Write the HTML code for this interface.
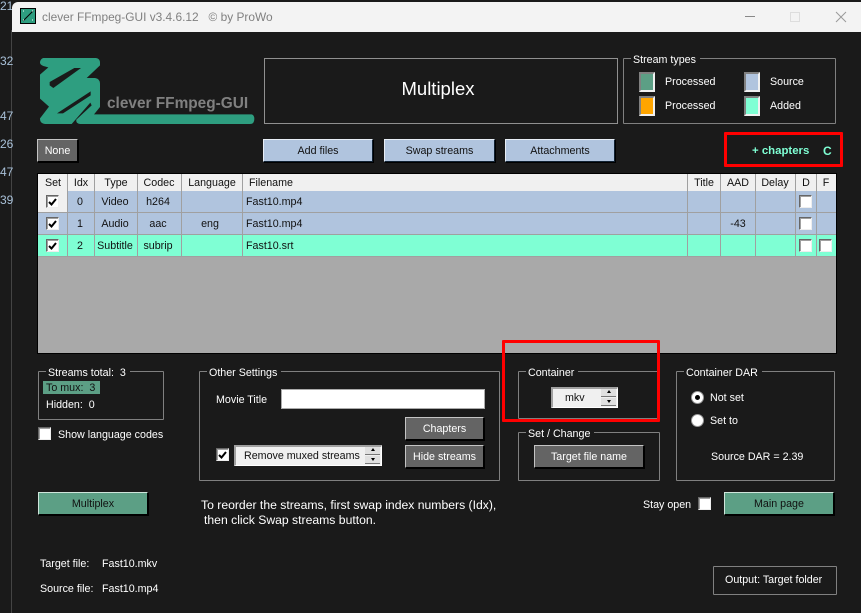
<!DOCTYPE html>
<html><head><meta charset="utf-8"><style>
html,body{margin:0;padding:0;background:#1a1a1a}
#p{position:relative;width:861px;height:613px;overflow:hidden;background:#1a1a1a;font:10.7px "Liberation Sans",sans-serif;color:#fff}
.t{position:absolute;white-space:nowrap;line-height:14px;transform:translateY(-6px)}
.c{transform:translate(-50%,-6px)}
.a{position:absolute;box-sizing:border-box}
.b{position:absolute;box-sizing:border-box;height:23px;text-align:center;line-height:22px;background:#646464;color:#fff;border:1px solid;border-color:#c4c4c4 #000 #000 #c4c4c4;box-shadow:1px 1px 0 #000}
.bl{background:#b0c4de;color:#111;border-color:#e8eef6 #123 #123 #e8eef6}
.gr{background:#5c9f85;color:#111;border-color:#cfe5db #000 #000 #cfe5db}
.g{position:absolute;box-sizing:border-box;border:1px solid #808080;border-radius:1px}
.gt{position:absolute;background:#1a1a1a;padding:0 4px 0 2px;line-height:14px;top:-6px;left:7px;white-space:nowrap}
.cb{position:absolute;box-sizing:border-box;width:13px;height:13px;background:#fff;border:1px solid;border-color:#666 #eee #eee #666;box-shadow:inset 1px 1px 0 #a0a0a0}
.cb svg{position:absolute;left:1px;top:1px}
.sw{position:absolute;box-sizing:border-box;width:16px;height:20px;border:2px solid;border-color:#808080 #f0f0f0 #f0f0f0 #808080}
.spin{position:absolute;box-sizing:border-box;height:21px;background:#f0f0f0;color:#111;border:1px solid #fff;border-top:2px solid #a0a0a0;border-left:2px solid #a0a0a0;line-height:18px}
.ar{position:absolute;right:1px;width:15px;height:8px;background:#e0e0e0;border-bottom:1px solid #777;box-sizing:border-box}
.ar:before{content:"";position:absolute;left:6px;border:2px solid transparent}
.u{top:0}.u:before{top:1px;border-bottom:3px solid #000;border-top:0}
.d{top:9px}.d:before{top:2px;border-top:3px solid #000;border-bottom:0}
.r{position:absolute;left:38px;width:798px;height:21px;border-bottom:1px solid #a0a0a0}
.v{position:absolute;top:174px;width:1px;height:82px;background:#a0a0a0}
.k{color:#111}
.rd{position:absolute;box-sizing:border-box;width:13px;height:13px;border-radius:50%;background:#fff;border:1px solid #999}
.red{position:absolute;box-sizing:border-box;border:3px solid #f00;border-radius:1px}
.n{color:#a8c0d8;font-size:12px}
</style></head><body><div id="p">

<!-- left strip -->
<div class="a" style="left:11px;top:30px;width:1px;height:583px;background:#444"></div>
<div class="t n" style="left:0;top:5px">21</div>
<div class="t n" style="left:0;top:60px">32</div>
<div class="t n" style="left:0;top:115px">47</div>
<div class="t n" style="left:0;top:143px">26</div>
<div class="t n" style="left:0;top:171px">47</div>
<div class="t n" style="left:0;top:199px">39</div>

<!-- title bar -->
<div class="a" style="left:12px;top:2px;width:849px;height:30px;background:#f3f3f3;border-top-left-radius:6px"></div>
<div class="a" style="left:20px;top:8px;width:16px;height:16px;background:#2e9e80;border:1px solid #000"></div>
<svg class="a" style="left:20px;top:8px" width="16" height="16"><path d="M3 13L13 3" stroke="#000" stroke-width="1"/><path d="M3 3h1M12 3h1M3 12h1M12 12h1" stroke="#fff"/></svg>
<div class="t" style="left:42px;top:16px;color:#808080;font-size:11.900px">clever FFmpeg-GUI v3.4.6.12&nbsp;&nbsp; © by ProWo</div>
<svg class="a" style="left:740px;top:6px" width="110" height="20"><path d="M5 10.500h10" stroke="#888"/><rect x="50.500" y="6.500" width="9" height="9" fill="none" stroke="#ddd"/><path d="M96 6l10 10M106 6l-10 10" stroke="#999" stroke-width="1"/></svg>

<!-- logo -->
<svg class="a" style="left:35px;top:52px" width="225" height="75" viewBox="0 0 675 225">
<path fill="#2e9e80" d="M25 18H183Q195 20 195 32V40L155 78H180Q195 80 195 95V165L177 187H650Q658 189 658 201Q658 216 645 216H135Q122 214 124 203L170 160L166 152L110 216H30Q14 214 15 199L42 164L15 140V68L40 46L25 42Q14 38 15 30Q17 20 25 18Z"/>
<path fill="#1a1a1a" d="M118 48H138L55 108L44 100V90ZM66 184H84L167 130V118Z"/>
</svg>
<div class="t" style="left:107px;top:103px;color:#808080;font-size:15.400px;font-weight:bold">clever FFmpeg-GUI</div>

<!-- multiplex box -->
<div class="a" style="left:264px;top:58px;width:354px;height:66px;border:1px solid #909090"></div>
<div class="t c" style="left:438px;top:88px;font-size:18.500px">Multiplex</div>

<!-- stream types -->
<div class="g" style="left:623px;top:58px;width:213px;height:66px"><div class="gt">Stream types</div></div>
<div class="sw" style="left:639px;top:72px;background:#5c9f85"></div>
<div class="sw" style="left:639px;top:96px;background:#ffa500"></div>
<div class="sw" style="left:744px;top:72px;background:#b0c4de"></div>
<div class="sw" style="left:744px;top:96px;background:#7fffd4"></div>
<div class="t" style="left:665px;top:81px">Processed</div>
<div class="t" style="left:665px;top:105px">Processed</div>
<div class="t" style="left:770px;top:81px">Source</div>
<div class="t" style="left:770px;top:105px">Added</div>

<!-- top buttons -->
<div class="b" style="left:37px;top:139px;width:41px">None</div>
<div class="b bl" style="left:263px;top:139px;width:110px">Add files</div>
<div class="b bl" style="left:384px;top:139px;width:111px">Swap streams</div>
<div class="b bl" style="left:505px;top:139px;width:110px">Attachments</div>
<div class="t" style="left:752px;top:150px;color:#7fffd4;font-weight:bold;font-size:11.400px">+ chapters</div>
<div class="t" style="left:823px;top:150px;color:#7fffd4;font-weight:bold;font-size:12px">C</div>
<div class="red" style="left:724px;top:132px;width:119px;height:35px"></div>

<!-- table -->
<div class="a" style="left:37px;top:173px;width:800px;height:181px;background:#a9a9a9;border:1px solid #000"></div>
<div class="a" style="left:38px;top:174px;width:798px;height:17px;background:#f0f0f0"></div>
<div class="r" style="top:191px;background:#b0c4de"></div>
<div class="r" style="top:213px;background:#b0c4de"></div>
<div class="r" style="top:235px;background:#7fffd4"></div>
<div class="a" style="left:38px;top:191px;width:29px;height:21px;background:#f0f0f0"></div>
<div class="v" style="left:67px"></div><div class="v" style="left:94px"></div><div class="v" style="left:137px"></div><div class="v" style="left:181px"></div><div class="v" style="left:242px"></div><div class="v" style="left:687px"></div><div class="v" style="left:720px"></div><div class="v" style="left:755px"></div><div class="v" style="left:795px"></div><div class="v" style="left:816px"></div>
<div class="t c k" style="left:53px;top:182px">Set</div>
<div class="t c k" style="left:81px;top:182px">Idx</div>
<div class="t c k" style="left:116px;top:182px">Type</div>
<div class="t c k" style="left:159px;top:182px">Codec</div>
<div class="t c k" style="left:212px;top:182px">Language</div>
<div class="t k" style="left:249px;top:182px">Filename</div>
<div class="t c k" style="left:704px;top:182px">Title</div>
<div class="t c k" style="left:738px;top:182px">AAD</div>
<div class="t c k" style="left:775px;top:182px">Delay</div>
<div class="t c k" style="left:806px;top:182px">D</div>
<div class="t c k" style="left:826px;top:182px">F</div>

<div class="t c k" style="left:80px;top:201px">0</div><div class="t c k" style="left:115px;top:201px">Video</div><div class="t c k" style="left:158px;top:201px">h264</div><div class="t k" style="left:246px;top:201px">Fast10.mp4</div>
<div class="t c k" style="left:80px;top:223px">1</div><div class="t c k" style="left:115px;top:223px">Audio</div><div class="t c k" style="left:158px;top:223px">aac</div><div class="t c k" style="left:210px;top:223px">eng</div><div class="t k" style="left:246px;top:223px">Fast10.mp4</div><div class="t c k" style="left:738px;top:223px">-43</div>
<div class="t c k" style="left:80px;top:245px">2</div><div class="t c k" style="left:115px;top:245px">Subtitle</div><div class="t c k" style="left:158px;top:245px">subrip</div><div class="t k" style="left:246px;top:245px">Fast10.srt</div>

<div class="cb" style="left:46px;top:195px"><svg width="10" height="10"><path d="M1 5l2.500 2.500L8 2" fill="none" stroke="#000" stroke-width="2"/></svg></div>
<div class="cb" style="left:46px;top:217px"><svg width="10" height="10"><path d="M1 5l2.500 2.500L8 2" fill="none" stroke="#000" stroke-width="2"/></svg></div>
<div class="cb" style="left:46px;top:239px"><svg width="10" height="10"><path d="M1 5l2.500 2.500L8 2" fill="none" stroke="#000" stroke-width="2"/></svg></div>
<div class="cb" style="left:799px;top:195px"></div>
<div class="cb" style="left:799px;top:217px"></div>
<div class="cb" style="left:799px;top:239px"></div>
<div class="cb" style="left:819px;top:239px"></div>

<!-- streams total -->
<div class="g" style="left:38px;top:371px;width:126px;height:49px"><div class="gt" style="left:7px">Streams total:&nbsp; 3</div></div>
<div class="a" style="left:43px;top:381px;width:57px;height:13px;background:#5c9f85"></div>
<div class="t k" style="left:46px;top:387px">To mux:&nbsp; 3</div>
<div class="t" style="left:46px;top:404px">Hidden:&nbsp; 0</div>
<div class="cb" style="left:38px;top:427px"></div>
<div class="t" style="left:58px;top:434px">Show language codes</div>

<!-- other settings -->
<div class="g" style="left:199px;top:371px;width:301px;height:110px"><div class="gt" style="left:7px">Other Settings</div></div>
<div class="t" style="left:216px;top:399px">Movie Title</div>
<div class="a" style="left:281px;top:389px;width:204px;height:20px;background:#fff;border:1px solid #aaa"></div>
<div class="b" style="left:405px;top:417px;width:79px">Chapters</div>
<div class="b" style="left:405px;top:445px;width:79px">Hide streams</div>
<div class="cb" style="left:216px;top:448px"><svg width="10" height="10"><path d="M1 5l2.500 2.500L8 2" fill="none" stroke="#000" stroke-width="2"/></svg></div>
<div class="spin" style="left:234px;top:445px;width:148px;padding-left:8px">Remove muxed streams<div class="ar u"></div><div class="ar d"></div></div>

<!-- container -->
<div class="g" style="left:518px;top:371px;width:142px;height:48px"><div class="gt">Container</div></div>
<div class="spin" style="left:551px;top:387px;width:67px;text-align:left;padding-left:12px">mkv<div class="ar u"></div><div class="ar d"></div></div>
<div class="red" style="left:502px;top:340px;width:158px;height:82px"></div>

<div class="g" style="left:518px;top:432px;width:142px;height:49px"><div class="gt">Set / Change</div></div>
<div class="b" style="left:534px;top:445px;width:110px">Target file name</div>

<!-- DAR -->
<div class="g" style="left:676px;top:371px;width:159px;height:110px"><div class="gt">Container DAR</div></div>
<div class="rd" style="left:691px;top:391px"></div>
<div class="a" style="left:695px;top:395px;width:5px;height:5px;border-radius:50%;background:#000"></div>
<div class="rd" style="left:691px;top:414px"></div>
<div class="t" style="left:710px;top:397px">Not set</div>
<div class="t" style="left:710px;top:420px">Set to</div>
<div class="t" style="left:711px;top:456px">Source DAR = 2.39</div>

<!-- bottom -->
<div class="b gr" style="left:38px;top:492px;width:110px">Multiplex</div>
<div class="t" style="left:201px;top:504px;font-size:12.200px">To reorder the streams, first swap index numbers (Idx),</div>
<div class="t" style="left:204px;top:519px;font-size:12.200px">then click Swap streams button.</div>
<div class="t" style="left:643px;top:504px">Stay open</div>
<div class="cb" style="left:698px;top:497px"></div>
<div class="b gr" style="left:724px;top:492px;width:110px">Main page</div>
<div class="t" style="left:40px;top:563px">Target file:</div>
<div class="t" style="left:102px;top:563px">Fast10.mkv</div>
<div class="t" style="left:40px;top:588px">Source file:</div>
<div class="t" style="left:102px;top:588px">Fast10.mp4</div>
<div class="g" style="left:713px;top:566px;width:124px;height:29px"></div>
<div class="t" style="left:725px;top:579px">Output: Target folder</div>
</div></body></html>
